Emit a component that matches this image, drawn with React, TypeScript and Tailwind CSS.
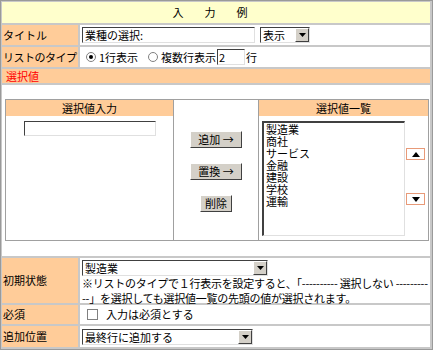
import React from 'react';

const font = { fontFamily: '"MS PGothic", "Noto Sans CJK JP", sans-serif' };

const Label: React.FC<{ children: React.ReactNode; className?: string }> = ({ children, className = '' }) => (
  <div className={`w-[76px] shrink-0 bg-[#ffcc99] flex items-center pl-[1px] whitespace-nowrap ${className}`}>{children}</div>
);

const inset = 'border-t border-l border-t-[#404040] border-l-[#404040] border-b border-r border-b-[#e0e0e0] border-r-[#e0e0e0]';
const outset = 'border border-t-white border-l-white border-b-[#404040] border-r-[#404040]';

const Select: React.FC<{ value: string; width: string }> = ({ value, width }) => (
  <div className={`${width} h-[16px] flex items-stretch bg-white ${inset}`}>
    <div className="flex-1 pl-[2px] leading-[14px] whitespace-nowrap overflow-hidden">{value}</div>
    <div className={`w-[14px] bg-[#d4d0c8] ${outset} flex items-center justify-center`}>
      <svg width="7" height="4" viewBox="0 0 7 4"><path d="M0 0h7L3.5 4z" fill="#000" /></svg>
    </div>
  </div>
);

const Btn: React.FC<{ children: React.ReactNode; className?: string }> = ({ children, className = '' }) => (
  <div className={`h-[17px] bg-[#d4d0c8] ${outset} flex items-center justify-center leading-none whitespace-nowrap ${className}`}>
    {children}
  </div>
);

const ArrowBtn: React.FC<{ up?: boolean }> = ({ up }) => (
  <div className="w-[19px] h-[12px] bg-white border border-[#e89a78] flex items-center justify-center">
    <svg width="8" height="5" viewBox="0 0 8 5">
      <path d={up ? 'M0 5h8L4 0z' : 'M0 0h8L4 5z'} fill="#000" />
    </svg>
  </div>
);

const items = ['製造業', '商社', 'サービス', '金融', '建設', '学校', '運輸'];

export default function App() {
  return (
    <div className="w-[433px] h-[350px] bg-white text-[11px] text-black overflow-hidden" style={font}>
      <div className="w-[433px] h-[350px] bg-[#c8c8c8] border border-[#9a9a9a] pt-px pl-px pr-[2px] pb-[2px] flex flex-col gap-[2px]">
        {/* header */}
        <div className="h-[21px] bg-[#ffffcc] flex items-center justify-center gap-[21px] pr-[12px]">
          <span>入</span><span>力</span><span>例</span>
        </div>

        <div className="h-[20px] flex gap-[2px]">
          <Label>タイトル</Label>
          <div className="flex-1 bg-white flex items-center pl-[2px] gap-[5px]">
            <div className={`w-[173px] h-[16px] leading-[14px] pl-[2px] ${inset}`}>業種の選択:</div>
            <Select value="表示" width="w-[50px]" />
          </div>
        </div>

        <div className="h-[20px] flex gap-[2px]">
          <Label>
            <span className="tracking-[-0.5px]">リストのタイプ</span>
          </Label>
          <div className="flex-1 bg-white flex items-center pl-[6px]">
            <span className="w-[10px] h-[10px] rounded-full border border-[#808080] flex items-center justify-center mr-[3px]">
              <span className="w-[4px] h-[4px] rounded-full bg-black" />
            </span>
            <span>1行表示</span>
            <span className="w-[10px] h-[10px] rounded-full border border-[#808080] ml-[10px] mr-[3px]" />
            <span>複数行表示</span>
            <div className={`w-[28px] h-[16px] leading-[14px] pl-[1px] ml-[1px] ${inset}`}>2</div>
            <span className="ml-[1px]">行</span>
          </div>
        </div>

        <div className="h-[14px] bg-[#ffcc99] text-[#ff0000] flex items-center pl-[4px]">選択値</div>

        {/* list editor */}
        <div className="h-[171px] bg-white flex flex-col pt-[14px] pl-[3px] pr-[1px]">
          <div className="h-[142px] flex border border-[#a0a0a0]">
            <div className="w-[168px] border-r border-[#a0a0a0] flex flex-col">
              <div className="h-[16px] bg-[#ffcc99] flex items-center justify-center">選択値入力</div>
              <div className="flex justify-center pt-[5px]">
                <div className={`w-[132px] h-[15px] ${inset}`} />
              </div>
            </div>
            <div className="w-[85px] border-r border-[#a0a0a0] flex flex-col items-center pt-[31px] gap-[15px]">
              <Btn className="w-[52px]">追加 →</Btn>
              <Btn className="w-[52px]">置換 →</Btn>
              <Btn className="w-[32px]">削除</Btn>
            </div>
            <div className="flex-1 flex flex-col">
              <div className="h-[16px] bg-[#ffcc99] flex items-center justify-center">選択値一覧</div>
              <div className="flex pl-[3px] pt-[5px] gap-[1px]">
                <div className="w-[143px] h-[115px] bg-white border-t-2 border-l-2 border-t-[#404040] border-l-[#404040] border-b border-r border-b-[#e0e0e0] border-r-[#e0e0e0] pl-[2px] leading-[12px]">
                  {items.map((it) => (
                    <div key={it}>{it}</div>
                  ))}
                </div>
                <div className="flex flex-col pt-[27px] gap-[33px]">
                  <ArrowBtn up />
                  <ArrowBtn />
                </div>
              </div>
            </div>
          </div>
        </div>

        <div className="h-[45px] flex gap-[2px]">
          <Label>初期状態</Label>
          <div className="flex-1 bg-white flex flex-col pl-[2px] pt-[2px] leading-[15px]">
            <Select value="製造業" width="w-[186px]" />
            <div className="whitespace-nowrap tracking-[-0.25px]">※リストのタイプで１行表示を設定すると、「---------- 選択しない ---------</div>
            <div className="whitespace-nowrap tracking-[-0.25px]">--」を選択しても選択値一覧の先頭の値が選択されます。</div>
          </div>
        </div>

        <div className="h-[19px] flex gap-[2px]">
          <Label>必須</Label>
          <div className="flex-1 bg-white flex items-center pl-[7px]">
            <span className="w-[11px] h-[11px] border border-[#808080] mr-[8px]" />
            <span>入力は必須とする</span>
          </div>
        </div>

        <div className="h-[21px] flex gap-[2px]">
          <Label>追加位置</Label>
          <div className="flex-1 bg-white flex items-center pl-[2px]">
            <Select value="最終行に追加する" width="w-[171px]" />
          </div>
        </div>
      </div>
    </div>
  );
}
